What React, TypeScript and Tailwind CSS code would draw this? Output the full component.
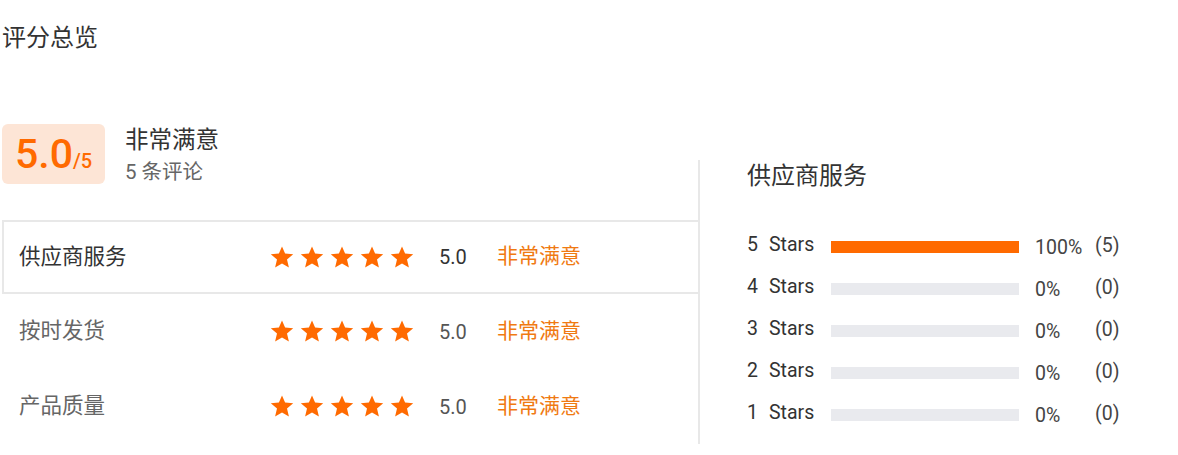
import React from "react";

const FONT = { fontFamily: "Roboto, 'Noto Sans CJK SC', 'Noto Sans', sans-serif" };

function Star() {
  return (
    <svg width="24" height="23" viewBox="0 0 24 23" className="shrink-0">
      <polygon
        points="12,0.5 15.1,7.6 23.2,8.3 17,13.6 18.9,21.6 12,17.4 5.1,21.6 7,13.6 0.8,8.3 8.9,7.6"
        fill="#ff6a00"
      />
    </svg>
  );
}

const rows = [
  { label: "供应商服务", active: true },
  { label: "按时发货", active: false },
  { label: "产品质量", active: false },
];

const dist = [
  { n: 5, pct: 100, count: 5 },
  { n: 4, pct: 0, count: 0 },
  { n: 3, pct: 0, count: 0 },
  { n: 2, pct: 0, count: 0 },
  { n: 1, pct: 0, count: 0 },
];

export default function App() {
  return (
    <div className="w-[1178px] h-[455px] bg-white pl-[2px] overflow-hidden" style={FONT}>
      <div className="mt-[22px] text-[24px] leading-[32px] text-[#333]">评分总览</div>

      <div className="mt-[70px] flex">
        {/* left column */}
        <div className="w-[696px] shrink-0">
          <div className="flex items-start">
            <div className="w-[103px] h-[60px] rounded-[6px] bg-[#fde5d6] flex items-baseline pl-[13px] pt-[2px]">
              <span className="text-[41px] leading-[56px] font-medium text-[#ff6a00]">5.0</span>
              <span className="text-[20px] font-medium text-[#ff6a00]">/5</span>
            </div>
            <div className="ml-[20px] flex flex-col">
              <span className="text-[23.5px] leading-[32px] text-[#333]">非常满意</span>
              <span className="text-[20.5px] leading-[32px] text-[#666]">5 条评论</span>
            </div>
          </div>

          <div className="mt-[32px] flex flex-col">
            {rows.map((r) => (
              <div
                key={r.label}
                className={
                  r.active
                    ? "h-[74px] border-2 border-r-0 border-[#e8e8e8] flex items-center pl-[15px]"
                    : "h-[75px] border-2 border-r-0 border-transparent flex items-center pl-[15px]"
                }
              >
                <span
                  className={
                    r.active
                      ? "w-[251px] text-[21.5px] text-[#333]"
                      : "w-[251px] text-[21.5px] text-[#666]"
                  }
                >
                  {r.label}
                </span>
                <div className="flex gap-[6px]">
                  <Star />
                  <Star />
                  <Star />
                  <Star />
                  <Star />
                </div>
                <span
                  className={
                    r.active
                      ? "ml-[25px] w-[58px] text-[20px] text-[#333]"
                      : "ml-[25px] w-[58px] text-[20px] text-[#555]"
                  }
                >
                  5.0
                </span>
                <span className="text-[21px] text-[#f07a12]">非常满意</span>
              </div>
            ))}
          </div>
        </div>

        {/* right column */}
        <div className="mt-[36px] flex-1 border-l-2 border-[#e8e8e8] pl-[47px]">
          <div className="text-[24px] leading-[32px] text-[#333]">供应商服务</div>
          <div className="mt-[34px] flex flex-col">
            {dist.map((d) => (
              <div key={d.n} className="h-[42px] flex items-center text-[19.5px] text-[#333]">
                <span className="w-[84px] pb-[5px] flex">
                  <span>{d.n}</span>
                  <span className="ml-[11px]">Stars</span>
                </span>
                <div className="w-[188px] h-[12px] bg-[#e9eaee]">
                  <div className="h-full bg-[#ff6a00]" style={{ width: `${d.pct}%` }} />
                </div>
                <span className="ml-[16px] w-[60px] pt-[2px] text-[#444]">{d.pct}%</span>
                <span className="pb-[2px] text-[#444]">({d.count})</span>
              </div>
            ))}
          </div>
        </div>
      </div>
    </div>
  );
}
